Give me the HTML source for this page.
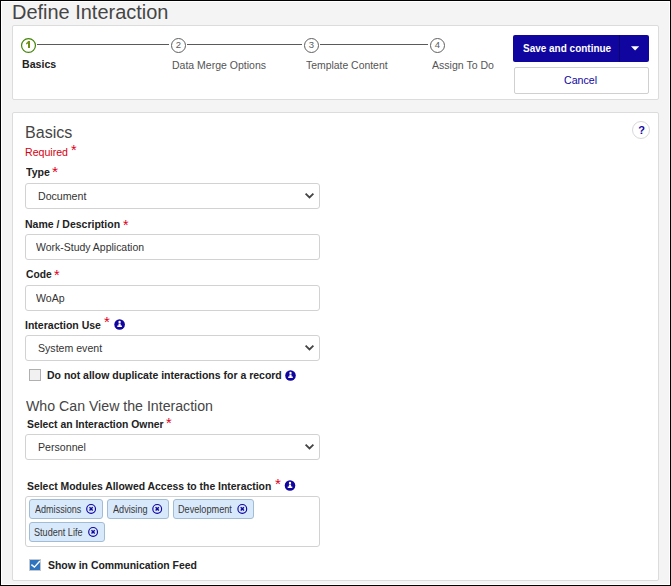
<!DOCTYPE html>
<html>
<head>
<meta charset="utf-8">
<style>
*{box-sizing:border-box;margin:0;padding:0}
html,body{width:671px;height:586px;overflow:hidden}
body{background:#f4f4f4;font-family:"Liberation Sans",sans-serif;font-size:12px;color:#222;position:relative}
.a{position:absolute}
.t{position:absolute;white-space:nowrap;line-height:1;transform-origin:0 0}
.panel{position:absolute;background:#fff;border:1px solid #dcdcdc;border-radius:2px}
.line{position:absolute;height:1px;background:#5a5a5a;top:44px}
.circ{position:absolute;width:15px;height:15px;border-radius:50%;border:1px solid #606060;background:#fff;top:38px}
.circ.on{border:1.6px solid #4f8a17}
.field{position:absolute;left:25px;width:295px;border:1px solid #d2d2d2;border-radius:3px;background:#fff}
.tag{position:absolute;height:20px;border:1px solid #a3bcd6;background:#d9e9fc;border-radius:3px}
.n{position:absolute;white-space:nowrap;line-height:1;font-size:9.5px;color:#5c5c5c;width:15px;text-align:center;top:40.4px}
</style>
</head>
<body>
<div class="panel" style="left:12px;top:25px;width:647px;height:75px"></div>
<div class="line" style="left:37px;width:132px"></div>
<div class="line" style="left:187px;width:115px"></div>
<div class="line" style="left:320px;width:108px"></div>
<svg class="a" style="left:20px;top:37px" width="17" height="17" viewBox="0 0 17 17"><circle cx="8.500" cy="8.500" r="6.950" fill="#fff" stroke="#438507" stroke-width="1.2"/></svg>
<div class="circ" style="left:171px"></div>
<div class="circ" style="left:304px"></div>
<div class="circ" style="left:430px"></div>
<svg class="a" style="left:21px;top:38px" width="15" height="15" viewBox="21 38 15 15"><path d="M28 40.900h2v7.100h-2v-4.500l-1.900 1.100v-1.700q1.400-0.700 1.900-2z" fill="#6f8f14"/></svg>
<div class="n" style="left:171px">2</div>
<div class="n" style="left:304px">3</div>
<div class="n" style="left:430px">4</div>

<div class="a" style="left:513px;top:35px;width:136px;height:27px;background:#10069f;border-radius:2px"></div>
<div class="a" style="left:619px;top:35px;width:1px;height:27px;background:#0a0470"></div>
<svg class="a" style="left:630px;top:45px" width="10" height="7" viewBox="0 0 10 7"><path d="M1 1.3h8.200L5.100 5.600z" fill="#fff"/></svg>
<div class="a" style="left:514px;top:67px;width:135px;height:27px;background:#fff;border:1px solid #d0d0d0;border-radius:2px"></div>

<div class="panel" style="left:12px;top:112px;width:647px;height:469px"></div>
<div class="a" style="left:632px;top:121px;width:18px;height:18px;border:1px solid #d8d8d8;border-radius:50%;background:#fff"></div>
<div class="t" style="left:638.2px;top:124.6px;font-size:11px;font-weight:bold;color:#10069f">?</div>

<div class="field" style="top:183px;height:26px"></div><svg class="a" style="left:304.3px;top:191.7px" width="11" height="8" viewBox="0 0 11 8"><path d="M1.600 1.6L5.500 5.400L9.400 1.6" fill="none" stroke="#444" stroke-width="1.8"/></svg>
<div class="field" style="top:234px;height:26px"></div>
<div class="field" style="top:285px;height:26px"></div>
<div class="field" style="top:335px;height:26px"></div><svg class="a" style="left:304.3px;top:343.7px" width="11" height="8" viewBox="0 0 11 8"><path d="M1.600 1.6L5.500 5.400L9.400 1.6" fill="none" stroke="#444" stroke-width="1.8"/></svg>
<div class="field" style="top:434px;height:26px"></div><svg class="a" style="left:304.3px;top:442.7px" width="11" height="8" viewBox="0 0 11 8"><path d="M1.600 1.6L5.500 5.400L9.400 1.6" fill="none" stroke="#444" stroke-width="1.8"/></svg>
<div class="field" style="top:496px;height:51px"></div>
<svg class="a" style="left:112px;top:317px" width="14" height="14" viewBox="-7.60 -7.50 14 14"><circle cx="0" cy="0" r="5.300" fill="#10069f"/><circle cx="0" cy="-2.5" r="1.200" fill="#fff"/><path d="M-1.100 -1h2.200v1.900h1.200v1.500h-4.600v-1.500h1.200z" fill="#fff"/></svg>
<svg class="a" style="left:283px;top:368px" width="14" height="14" viewBox="-7.50 -7.50 14 14"><circle cx="0" cy="0" r="5.300" fill="#10069f"/><circle cx="0" cy="-2.5" r="1.200" fill="#fff"/><path d="M-1.100 -1h2.200v1.900h1.200v1.500h-4.600v-1.500h1.200z" fill="#fff"/></svg>
<svg class="a" style="left:283px;top:478px" width="14" height="14" viewBox="-7.00 -7.50 14 14"><circle cx="0" cy="0" r="5.300" fill="#10069f"/><circle cx="0" cy="-2.5" r="1.200" fill="#fff"/><path d="M-1.100 -1h2.200v1.900h1.200v1.500h-4.600v-1.500h1.200z" fill="#fff"/></svg>

<div class="a" style="left:29px;top:369px;width:12px;height:12px;border:1px solid #b0b0b0;background:#f1f1f1"></div>

<div class="tag" style="left:29px;top:499px;width:74px"></div><div class="tag" style="left:107px;top:499px;width:62px"></div><div class="tag" style="left:173px;top:499px;width:81px"></div><div class="tag" style="left:29px;top:522px;width:76px"></div>
<svg class="a" style="left:84px;top:501px" width="14" height="14" viewBox="-7.10 -7.90 14 14"><circle cx="0" cy="0" r="4.400" fill="none" stroke="#10069f" stroke-width="1.150"/><path d="M-1.6 -1.6L1.600 1.600M1.600 -1.6L-1.6 1.600" stroke="#10069f" stroke-width="1.4" fill="none"/></svg><svg class="a" style="left:150px;top:501px" width="14" height="14" viewBox="-7.20 -7.90 14 14"><circle cx="0" cy="0" r="4.400" fill="none" stroke="#10069f" stroke-width="1.150"/><path d="M-1.6 -1.6L1.600 1.600M1.600 -1.6L-1.6 1.600" stroke="#10069f" stroke-width="1.4" fill="none"/></svg><svg class="a" style="left:235px;top:501px" width="14" height="14" viewBox="-7.30 -7.90 14 14"><circle cx="0" cy="0" r="4.400" fill="none" stroke="#10069f" stroke-width="1.150"/><path d="M-1.6 -1.6L1.600 1.600M1.600 -1.6L-1.6 1.600" stroke="#10069f" stroke-width="1.4" fill="none"/></svg><svg class="a" style="left:86px;top:524px" width="14" height="14" viewBox="-7.10 -7.90 14 14"><circle cx="0" cy="0" r="4.400" fill="none" stroke="#10069f" stroke-width="1.150"/><path d="M-1.6 -1.6L1.600 1.600M1.600 -1.6L-1.6 1.600" stroke="#10069f" stroke-width="1.4" fill="none"/></svg>

<div class="a" style="left:29px;top:559px;width:12px;height:12px;background:#2f74bf;border:1px solid #c4c8cc"></div>
<svg class="a" style="left:29px;top:559px" width="12" height="12" viewBox="0 0 12 12"><path d="M2.400 5.600L5.400 8.100L10.900 2" fill="none" stroke="#fff" stroke-width="1.4"/></svg>

<div class="t" style="left:12.17px;top:3.26px;font-size:19.3px;color:#454545;transform:scaleX(1.0348)">Define Interaction</div>
<div class="t" style="left:22.10px;top:59.27px;font-size:11.5px;color:#222;transform:scaleX(0.9240);font-weight:bold">Basics</div>
<div class="t" style="left:172.00px;top:59.57px;font-size:11.5px;color:#555;transform:scaleX(0.9131)">Data Merge Options</div>
<div class="t" style="left:305.85px;top:59.57px;font-size:11.5px;color:#555;transform:scaleX(0.9050)">Template Content</div>
<div class="t" style="left:431.95px;top:59.57px;font-size:11.5px;color:#555;transform:scaleX(0.9175)">Assign To Do</div>
<div class="t" style="left:522.85px;top:43.27px;font-size:11.5px;color:#fff;transform:scaleX(0.8675);font-weight:bold">Save and continue</div>
<div class="t" style="left:564.20px;top:74.52px;font-size:11.5px;color:#10069f;transform:scaleX(0.9222)">Cancel</div>
<div class="t" style="left:24.89px;top:124.82px;font-size:16.75px;color:#454545;transform:scaleX(0.9602)">Basics</div>
<div class="t" style="left:25.35px;top:147.27px;font-size:11.5px;color:#d6000f;transform:scaleX(0.9196)">Required</div>
<div class="t" style="left:25.85px;top:167.27px;font-size:11.5px;color:#222;transform:scaleX(0.9202);font-weight:bold">Type</div>
<div class="t" style="left:38.35px;top:190.52px;font-size:11.5px;color:#333;transform:scaleX(0.9226)">Document</div>
<div class="t" style="left:25.35px;top:218.52px;font-size:11.5px;color:#222;transform:scaleX(0.9127);font-weight:bold">Name / Description</div>
<div class="t" style="left:35.95px;top:242.27px;font-size:11.5px;color:#333;transform:scaleX(0.9107)">Work-Study Application</div>
<div class="t" style="left:25.85px;top:268.52px;font-size:11.5px;color:#222;transform:scaleX(0.8923);font-weight:bold">Code</div>
<div class="t" style="left:35.85px;top:292.52px;font-size:11.5px;color:#333;transform:scaleX(0.9214)">WoAp</div>
<div class="t" style="left:25.35px;top:319.52px;font-size:11.5px;color:#222;transform:scaleX(0.9144);font-weight:bold">Interaction Use</div>
<div class="t" style="left:38.35px;top:343.27px;font-size:11.5px;color:#333;transform:scaleX(0.9202)">System event</div>
<div class="t" style="left:47.00px;top:369.52px;font-size:11.5px;color:#222;transform:scaleX(0.9117);font-weight:bold">Do not allow duplicate interactions for a record</div>
<div class="t" style="left:26.10px;top:399.62px;font-size:13.8px;color:#454545;transform:scaleX(1.0259)">Who Can View the Interaction</div>
<div class="t" style="left:26.95px;top:418.52px;font-size:11.5px;color:#222;transform:scaleX(0.9017);font-weight:bold">Select an Interaction Owner</div>
<div class="t" style="left:38.35px;top:441.52px;font-size:11.5px;color:#333;transform:scaleX(0.9233)">Personnel</div>
<div class="t" style="left:26.90px;top:480.52px;font-size:11.5px;color:#222;transform:scaleX(0.9043);font-weight:bold">Select Modules Allowed Access to the Interaction</div>
<div class="t" style="left:34.60px;top:504.74px;font-size:10px;color:#383838;transform:scaleX(0.9056)">Admissions</div>
<div class="t" style="left:112.60px;top:504.74px;font-size:10px;color:#383838;transform:scaleX(0.9144)">Advising</div>
<div class="t" style="left:178.35px;top:504.74px;font-size:10px;color:#383838;transform:scaleX(0.9139)">Development</div>
<div class="t" style="left:34.20px;top:527.74px;font-size:10px;color:#383838;transform:scaleX(0.9087)">Student Life</div>
<div class="t" style="left:48.10px;top:560.27px;font-size:11.5px;color:#222;transform:scaleX(0.9070);font-weight:bold">Show in Communication Feed</div>
<div class="t" style="left:71.40px;top:144.44px;font-size:13.89px;color:#e0001b;transform:scaleX(1.0440)">*</div>
<div class="t" style="left:51.50px;top:165.37px;font-size:14.44px;color:#e0001b;transform:scaleX(1.0800)">*</div>
<div class="t" style="left:123.00px;top:218.07px;font-size:14.44px;color:#e0001b;transform:scaleX(0.9900)">*</div>
<div class="t" style="left:54.00px;top:267.97px;font-size:14.44px;color:#e0001b;transform:scaleX(1.0080)">*</div>
<div class="t" style="left:104.40px;top:315.84px;font-size:13.89px;color:#e0001b;transform:scaleX(1.0800)">*</div>
<div class="t" style="left:165.75px;top:416.11px;font-size:14.17px;color:#e0001b;transform:scaleX(1.0350)">*</div>
<div class="t" style="left:275.00px;top:477.01px;font-size:14.17px;color:#e0001b;transform:scaleX(1.0800)">*</div>

<div class="a" style="left:0;top:0;width:671px;height:586px;border:1px solid #000"></div>
<div class="a" style="left:1px;top:1px;width:669px;height:584px;border:1px solid #fff"></div>
</body>
</html>
